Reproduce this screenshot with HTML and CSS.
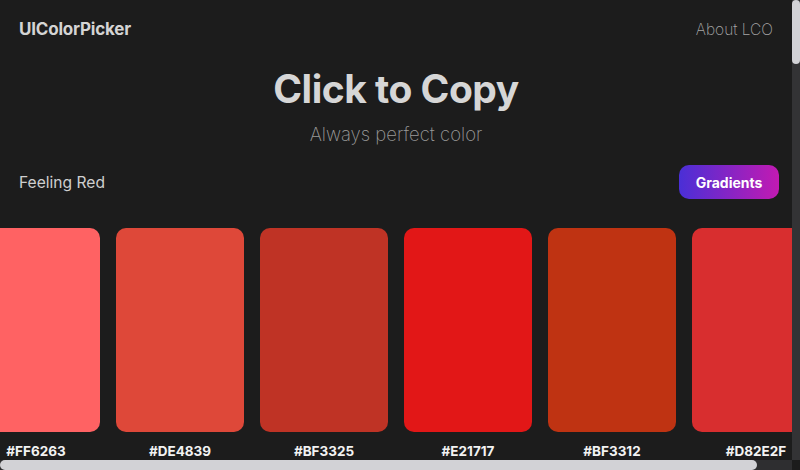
FILE: index.html
```html
<!DOCTYPE html>
<html lang="en">
<head>
<meta charset="utf-8">
<title>UIColorPicker</title>
<link rel="stylesheet" href="styles.css">
</head>
<body>
<div class="page">
  <header class="topbar">
    <div class="logo">UIColorPicker</div>
    <a class="about" href="#">About LCO</a>
  </header>
  <section class="hero">
    <h1 class="title">Click to Copy</h1>
    <p class="subtitle">Always perfect color</p>
  </section>
  <section class="palette">
    <div class="toolbar">
      <span class="mood">Feeling Red</span>
      <button class="btn-gradients">Gradients</button>
    </div>
    <div class="swatch-row">
      <div class="swatch"><div class="chip" style="background:#FF6263"></div><div class="hex">#FF6263</div></div>
      <div class="swatch"><div class="chip" style="background:#DE4839"></div><div class="hex">#DE4839</div></div>
      <div class="swatch"><div class="chip" style="background:#BF3325"></div><div class="hex">#BF3325</div></div>
      <div class="swatch"><div class="chip" style="background:#E21717"></div><div class="hex">#E21717</div></div>
      <div class="swatch"><div class="chip" style="background:#BF3312"></div><div class="hex">#BF3312</div></div>
      <div class="swatch"><div class="chip" style="background:#D82E2F"></div><div class="hex">#D82E2F</div></div>
    </div>
    <div class="hscroll"><div class="hscroll-thumb"></div></div>
  </section>
</div>
<div class="vscroll"><div class="vscroll-thumb"></div></div>
</body>
</html>
```

FILE: styles.css
```css
html {
  background: #1c1c1c;
  overflow: hidden;
}
body {
  margin: 0;
  background: #1c1c1c;
  color: #d6d6d6;
  font-family: Inter, "Noto Sans", "Liberation Sans", sans-serif;
}
.page {
  width: 792px;
  overflow: hidden;
}
.topbar {
  height: 58px;
  display: flex;
  align-items: center;
  justify-content: space-between;
  padding: 0 19px;
}
.logo {
  font-size: 17px;
  font-weight: 700;
  color: #d4d4d4;
  letter-spacing: -0.2px;
}
.about {
  font-size: 15.5px;
  font-weight: 200;
  color: #a6a6a6;
  text-decoration: none;
}
.hero {
  padding-top: 7px;
  text-align: center;
}
.title {
  margin: 0;
  font-size: 39px;
  line-height: 48px;
  font-weight: 700;
  color: #d6d6d6;
  letter-spacing: -0.5px;
}
.subtitle {
  margin: 9px 0 0;
  font-size: 18.5px;
  line-height: 24px;
  font-weight: 200;
  color: #9a9a9a;
}
.toolbar {
  margin-top: 19px;
  display: flex;
  align-items: center;
  justify-content: space-between;
  padding: 0 13px 0 19px;
}
.mood {
  font-size: 15.6px;
  color: #cfcfcf;
}
.btn-gradients {
  width: 100px;
  height: 34px;
  border: 0;
  border-radius: 10px;
  background: linear-gradient(90deg, #4a2fd6, #c21ab2);
  color: #fff;
  font-family: inherit;
  font-size: 14px;
  font-weight: 700;
}
.swatch-row {
  margin-top: 29px;
  display: flex;
  justify-content: center;
  gap: 16px;
  overflow: hidden;
}
.swatch {
  flex: 0 0 128px;
  display: flex;
  flex-direction: column;
  align-items: center;
}
.chip {
  width: 128px;
  height: 204px;
  border-radius: 10px;
}
.hex {
  margin-top: 11px;
  font-size: 13.5px;
  line-height: 17px;
  font-weight: 700;
  color: #f2f2f2;
}
.hscroll {
  height: 10px;
  background: #2e2e30;
}
.hscroll-thumb {
  width: 757px;
  height: 10px;
  border-radius: 5px;
  background: #d2d2d6;
}
.vscroll {
  position: fixed;
  top: 0;
  right: 0;
  width: 8px;
  height: 460px;
  background: #333335;
}
.vscroll-thumb {
  height: 64px;
  border-radius: 4px;
  background: #d2d2d6;
}
```
